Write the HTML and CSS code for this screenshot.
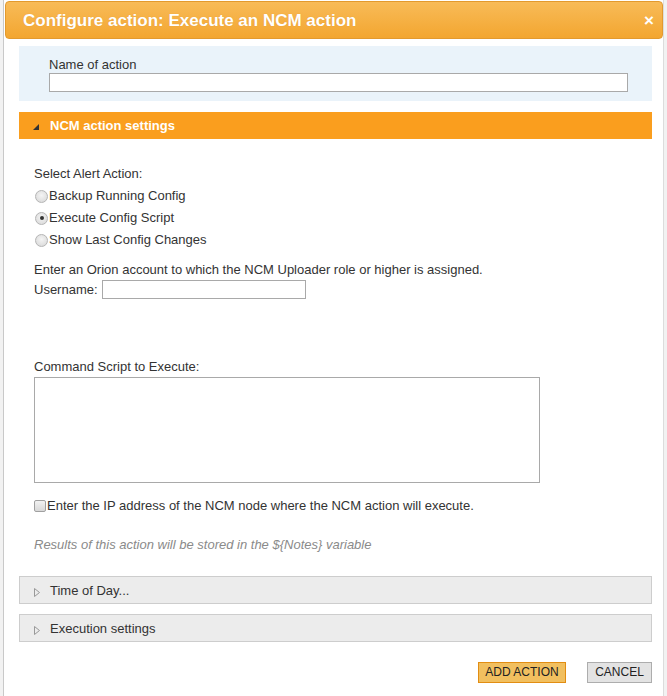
FILE: index.html
```html
<!DOCTYPE html>
<html>
<head>
<meta charset="utf-8">
<link rel="stylesheet" href="styles.css">
</head>
<body>
<div class="dialog">
  <div class="titlebar">
    <span class="title">Configure action: Execute an NCM action</span>
    <span class="close">&#215;</span>
  </div>
  <div class="content">
    <div class="name-panel">
      <div class="label">Name of action</div>
      <div class="input name-input"></div>
    </div>
    <div class="section-head open">
      <svg class="tri-open" width="6" height="6" viewBox="0 0 6 6"><polygon points="6,0 6,6 0,6" fill="#333"/></svg>
      <span>NCM action settings</span>
    </div>
    <div class="settings">
      <div class="row select-label">Select Alert Action:</div>
      <div class="row radio-row"><span class="radio"></span>Backup Running Config</div>
      <div class="row radio-row"><span class="radio checked"></span>Execute Config Script</div>
      <div class="row radio-row"><span class="radio"></span>Show Last Config Changes</div>
      <div class="row account">Enter an Orion account to which the NCM Uploader role or higher is assigned.</div>
      <div class="row user-row">Username: <span class="input user-input"></span></div>
      <div class="row script-label">Command Script to Execute:</div>
      <div class="textarea"></div>
      <div class="row check-row"><span class="checkbox"></span>Enter the IP address of the NCM node where the NCM action will execute.</div>
      <div class="row note">Results of this action will be stored in the ${Notes} variable</div>
    </div>
    <div class="section-head closed">
      <svg class="tri-closed" width="6" height="9" viewBox="0 0 6 9"><polygon points="0.5,0.5 5.5,4.5 0.5,8.5" fill="none" stroke="#999" stroke-width="1"/></svg>
      <span>Time of Day...</span>
    </div>
    <div class="section-head closed second">
      <svg class="tri-closed" width="6" height="9" viewBox="0 0 6 9"><polygon points="0.5,0.5 5.5,4.5 0.5,8.5" fill="none" stroke="#999" stroke-width="1"/></svg>
      <span>Execution settings</span>
    </div>
    <div class="buttons">
      <span class="btn primary">ADD ACTION</span>
      <span class="btn cancel">CANCEL</span>
    </div>
  </div>
</div>
</body>
</html>
```
FILE: styles.css
```css
html, body {
  margin: 0;
  padding: 0;
}
body {
  background: #f2f2f2;
  font-family: "Liberation Sans", Arial, sans-serif;
  font-size: 13px;
  color: #333;
}
.dialog {
  width: 659px;
  height: 696px;
  margin-left: 3px;
  background: #fff;
  border-left: 1px solid #c9c9c9;
  border-right: 1px solid #dcdcdc;
  box-sizing: content-box;
}
.titlebar {
  margin: 0 0 0 1px;
  position: relative;
  top: 1px;
  width: 656px;
  height: 36px;
  border: 1px solid #e39a2e;
  border-radius: 4px;
  background: linear-gradient(#f8bb58, #f3a630);
  display: flex;
  align-items: center;
  justify-content: space-between;
}
.title {
  color: #fff;
  font-weight: bold;
  font-size: 17px;
  padding-left: 17px;
  margin-top: 2px;
  text-shadow: 0 0 1px rgba(180,100,0,0.3);
}
.close {
  color: #fff;
  font-weight: bold;
  font-size: 17px;
  padding-right: 8px;
  margin-top: 2px;
}
.content {
  padding: 8px 11px 0 15px;
  margin-top: 0;
}
.name-panel {
  background: #eaf3fa;
  height: 55px;
  padding: 11px 0 0 30px;
  box-sizing: border-box;
}
.label {
  line-height: 16px;
}
.input {
  display: inline-block;
  background: #fff;
  border: 1px solid #a9a9a9;
  box-sizing: border-box;
  vertical-align: middle;
}
.name-input {
  display: block;
  width: 579px;
  height: 19px;
  margin-top: 0;
}
.section-head {
  height: 27px;
  margin-top: 11px;
  display: flex;
  align-items: center;
  box-sizing: border-box;
}
.section-head.open {
  background: #fa9e1e;
  color: #fff;
  font-weight: bold;
}
.tri-open {
  margin: 0 11px 0 14px;
  position: relative;
  top: 1px;
}
.section-head.closed {
  background: #ececec;
  border: 1px solid #cdcdcd;
  height: 28px;
  margin-top: 0;
}
.section-head.closed.second {
  margin-top: 10px;
}
.tri-closed {
  margin: 0 10px 0 14px;
  position: relative;
  top: 2px;
}
.settings {
  padding: 24px 0 20px 15px;
}
.row {
  line-height: 22px;
  white-space: nowrap;
}
.radio-row {
  display: flex;
  align-items: center;
}
.radio {
  display: inline-block;
  width: 13px;
  height: 13px;
  border: 1px solid #b5b5b5;
  border-radius: 50%;
  background: radial-gradient(circle at 50% 40%, #f4f4f4, #d6d6d6);
  box-sizing: border-box;
  margin: 0 1px 0 1px;
  position: relative;
}
.radio.checked::after {
  content: "";
  position: absolute;
  left: 3.5px;
  top: 3.5px;
  width: 4px;
  height: 4px;
  border-radius: 50%;
  background: #333;
}
.account {
  margin-top: 9px;
  line-height: 20px;
}
.user-row {
  line-height: 20px;
}
.user-input {
  width: 204px;
  height: 19px;
  margin-left: 1px;
  position: relative;
  top: -1px;
}
.script-label {
  margin-top: 56px;
  line-height: 21px;
}
.textarea {
  width: 506px;
  height: 106px;
  border: 1px solid #a9a9a9;
  box-sizing: border-box;
  margin-top: 0;
}
.check-row {
  margin-top: 12px;
  display: flex;
  align-items: center;
}
.checkbox {
  display: inline-block;
  width: 12px;
  height: 12px;
  border: 1px solid #a0a0a0;
  border-radius: 2px;
  background: linear-gradient(#f2f2f2, #d8d8d8);
  box-sizing: border-box;
  margin-right: 1px;
}
.note {
  margin-top: 17px;
  font-style: italic;
  color: #8a8a8a;
}
.buttons {
  display: flex;
  justify-content: flex-end;
  gap: 21px;
  margin-top: 20px;
}
.btn {
  display: inline-block;
  height: 21px;
  line-height: 19px;
  padding: 0;
  border: 1px solid #adadad;
  background: #e3e3e3;
  color: #222;
  font-size: 12px;
  box-sizing: border-box;
  white-space: nowrap;
  text-align: center;
}
.btn.primary {
  background: #f1bf5f;
  border-color: #e28d12;
  width: 88px;
}
.btn.cancel {
  width: 65px;
}
```
